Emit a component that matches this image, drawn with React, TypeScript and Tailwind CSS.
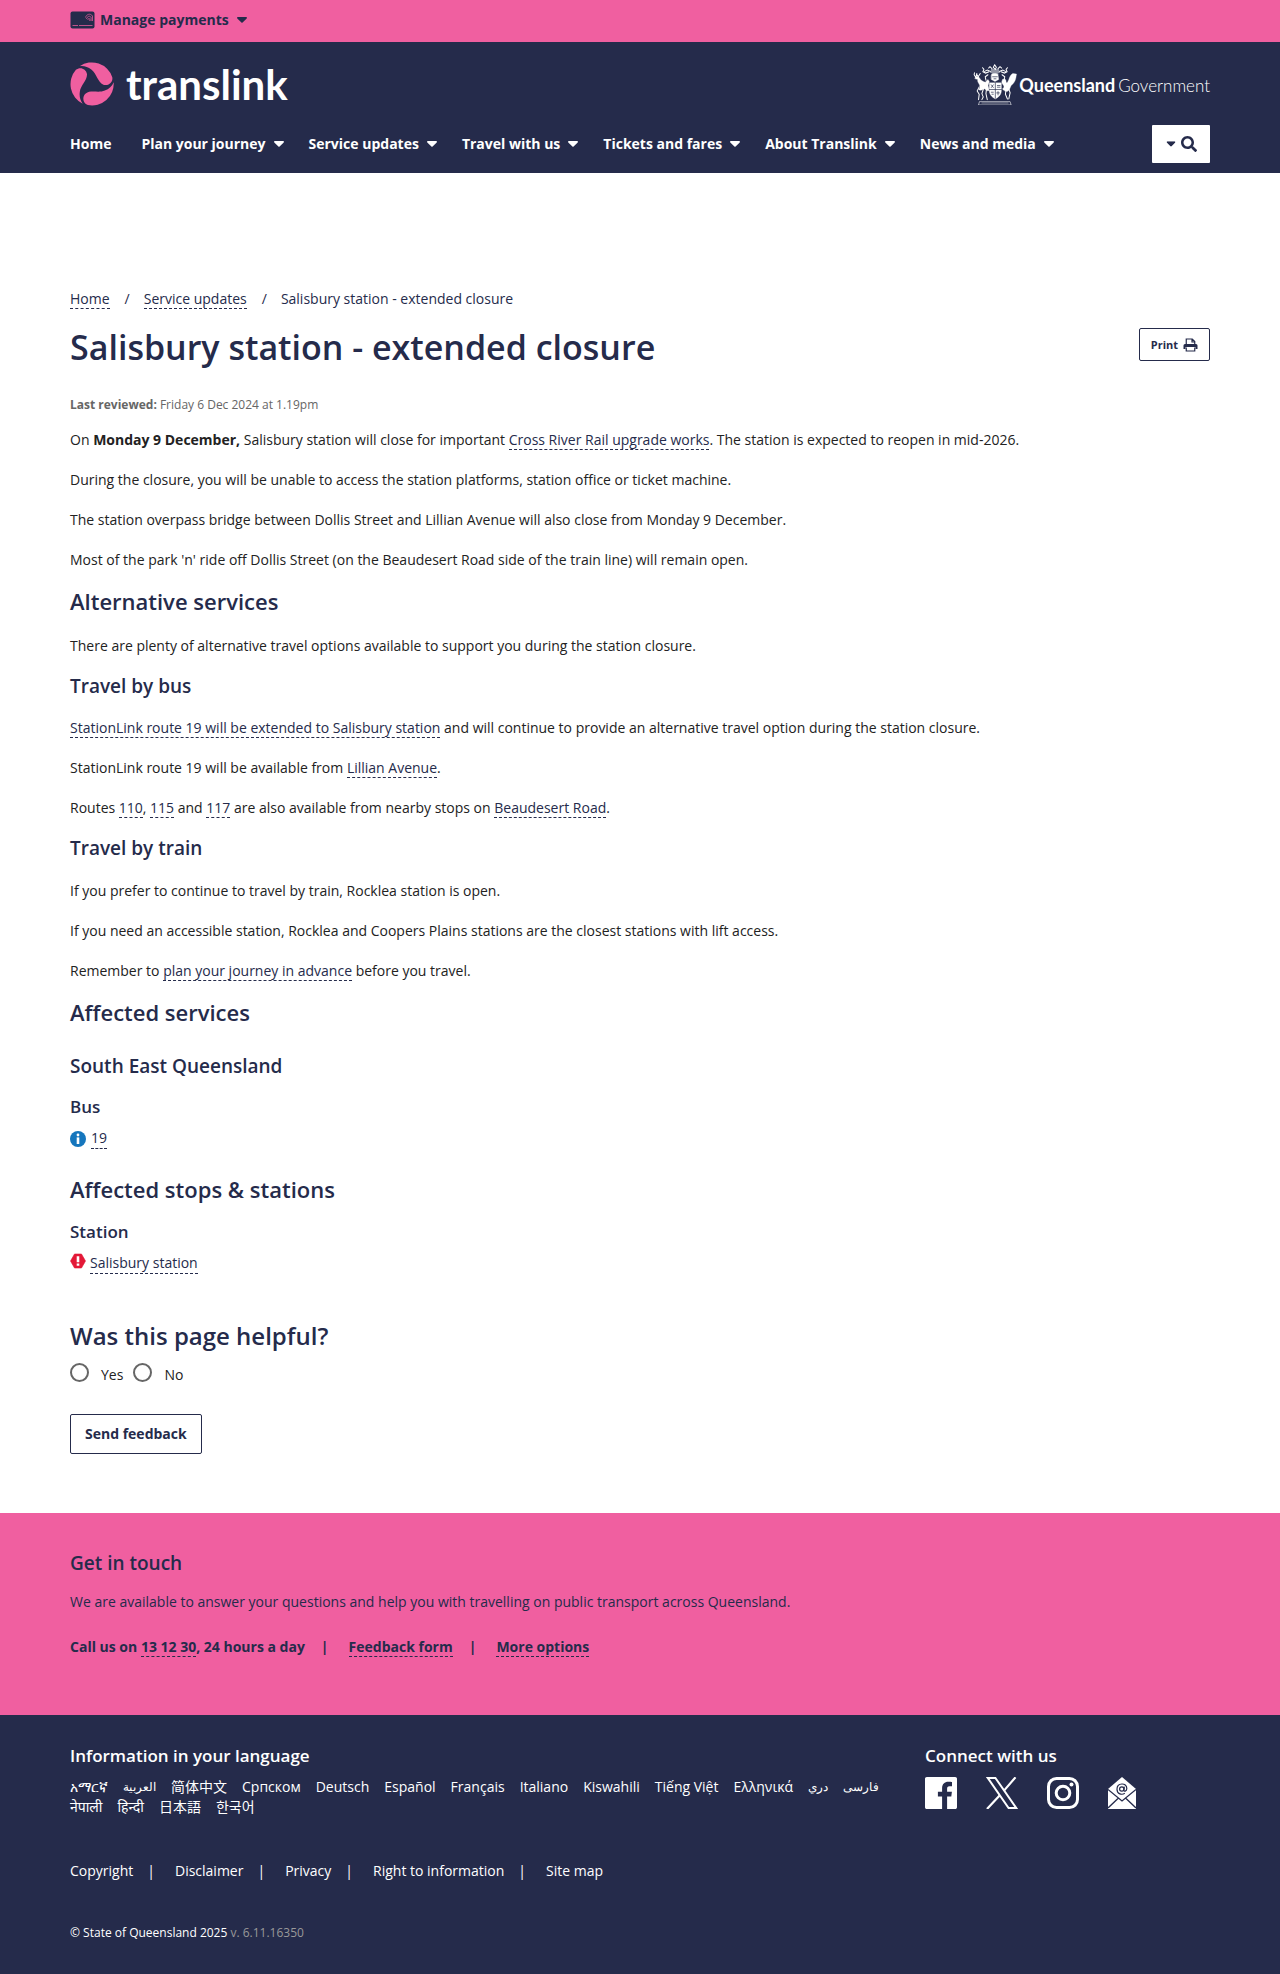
import React from "react";
import { FaSearch } from "react-icons/fa";

const navItems = [
  "Plan your journey",
  "Service updates",
  "Travel with us",
  "Tickets and fares",
  "About Translink",
  "News and media",
];

const languages: { label: string; lang: string; small?: boolean }[] = [
  { label: "አማርኛ", lang: "am" },
  { label: "العربية", lang: "ar", small: true },
  { label: "简体中文", lang: "zh-Hans" },
  { label: "Српском", lang: "sr" },
  { label: "Deutsch", lang: "de" },
  { label: "Español", lang: "es" },
  { label: "Français", lang: "fr" },
  { label: "Italiano", lang: "it" },
  { label: "Kiswahili", lang: "sw" },
  { label: "Tiếng Việt", lang: "vi" },
  { label: "Ελληνικά", lang: "el" },
  { label: "دري", lang: "prs", small: true },
  { label: "فارسی", lang: "fa", small: true },
  { label: "नेपाली", lang: "ne" },
  { label: "हिन्दी", lang: "hi" },
  { label: "日本語", lang: "ja" },
  { label: "한국어", lang: "ko" },
];

const legalLinks = ["Copyright", "Disclaimer", "Privacy", "Right to information", "Site map"];

function Caret({ className = "" }: { className?: string }) {
  return (
    <svg viewBox="0 0 10 6" className={`h-[6px] w-[10px] shrink-0 ${className}`} fill="currentColor" aria-hidden="true">
      <path d="M.9 0h8.2c.8 0 1.2.9.6 1.4L5.6 5.6a.9.9 0 0 1-1.2 0L.3 1.4C-.3.9.1 0 .9 0z" />
    </svg>
  );
}

function CardIcon() {
  return (
    <svg viewBox="0 0 25 18" className="h-[18px] w-[25px]" aria-hidden="true">
      <rect x=".5" y=".5" width="24" height="17" rx="2" fill="#252b4b" />
      <path d="M2.500 14.500H8M9 14.500h13.500" stroke="#f05fa0" strokeWidth="1" opacity=".75" />
      <g fill="none" stroke="#f05fa0" strokeWidth=".8" opacity=".9">
        <path d="M15.500 6.500c1-3.500 5-4.500 7-1.500v5" />
        <path d="M16.500 8c.8-3 3.400-3.700 4.600-1.500v3.500" />
        <path d="M17.800 9c.5-2 1.600-2 2-.8V10" />
      </g>
    </svg>
  );
}

function TranslinkMark() {
  const blade = "M28 12A63 63 0 0 1 123 44C126 60 110 71 97 66C80 59 78 34 62 22C52 14 40 10 28 12Z";
  return (
    <svg viewBox="0 0 128 128" className="size-[44px]" fill="#f05fa0" aria-hidden="true">
      <path d={blade} />
      <path d={blade} transform="rotate(120 64 64)" />
      <path d={blade} transform="rotate(240 64 64)" />
    </svg>
  );
}

function CrestIcon() {
  return (
    <svg viewBox="18 18 130 122" className="h-[41px] w-[44px]" fill="#fff" stroke="#fff" strokeLinecap="round" aria-hidden="true">
      <g fill="none" strokeWidth="3">
        <path d="M26 58l-5-8 1-6M26 58l3-12M33 56l-5-8M33 56l6-10" />
        <path d="M82 20l-4 8 6 6M82 20l5 8-3 6M74 32l-6-6-4 4M92 32l6-6 5 4M50 34l-4-5M50 34l-3 7 8 4 10-4M116 34l4-5M116 34l3 7-8 4-10-4M62 50l-8 6 2 10M104 50l8 6-2 10M70 40l-10-4-8 4M96 40l10-4 8 4" />
        <path d="M72 36h22M70 42h26M74 48h18" />
        <path d="M36 86l-6 12 6 10-2 16M48 94l-4 12 4 10-4 8M58 90l-2 16 4 18M116 94l-2 14 6 14M124 92l4 12-4 18" />
        <path d="M38 130h90l3 10H35z" strokeWidth="1.800" />
        <path d="M44 134h78" strokeWidth="1.400" />
      </g>
      <g strokeWidth="1">
        <path d="M24 58c4-4 9-4 12 0 4 8 10 12 18 14l8-8 4 6-4 12 4 14c-6 4-10 0-14-4-6 4-14 6-18 2 4-4 6-8 2-16-4-6-6-10-4-14l-8-2z" />
        <path d="M106 64c6-4 10 0 10 6 0 4 3 5 5 1 5-8 5-20 15-25l11 2-2 12c-2 10-8 18-14 22-4 8-4 14-12 18-6 0-12-4-14-8 6-2 6-8 2-12-4-6-6-10-1-16z" />
        <path d="M72 50c4-5 16-5 20 0l2 14-11 6-11-6z" />
        <path d="M66 74h36v22c0 14-8 20-18 26-10-6-18-12-18-26z" />
      </g>
      <g fill="none" stroke="#252b4b" strokeWidth="2">
        <path d="M84 74v46M66 94h36M72 80l6 8M78 80l-6 8M90 82h8M90 87h8M72 102h6M74 108h4M92 100v10M88 104h8M76 56h14M80 62h6" />
      </g>
    </svg>
  );
}

function PrinterIcon() {
  return (
    <svg viewBox="0 0 30 28" className="h-[14px] w-[15px]" aria-hidden="true">
      <path d="M6.500 12V2h12l5 5v5M18 2v6h5" fill="none" stroke="#252b4b" strokeWidth="2.400" />
      <path d="M4 12h22a3 3 0 0 1 3 3v7h-4v-4H5v4H1v-7a3 3 0 0 1 3-3z" fill="#252b4b" />
      <path d="M6.500 19v7h17v-7" fill="#fff" stroke="#252b4b" strokeWidth="2.400" />
    </svg>
  );
}

function InfoIcon() {
  return (
    <svg viewBox="0 0 16 16" className="size-4" aria-hidden="true">
      <circle cx="8" cy="8" r="8" fill="#1576bd" />
      <circle cx="8" cy="4" r="1.400" fill="#fff" />
      <rect x="6.700" y="6.400" width="2.600" height="6.600" fill="#fff" />
    </svg>
  );
}

function AlertIcon() {
  return (
    <svg viewBox="0 0 16 14" className="size-4" aria-hidden="true">
      <path d="M4.500 0h7L15.500 7l-4 7h-7L.5 7z" fill="#e31837" stroke="#e31837" strokeLinejoin="round" strokeWidth=".6" />
      <path d="M6.700 2.200h2.600v6H6.700zM6.700 9.600h2.600v2.200H6.700z" fill="#fff" />
    </svg>
  );
}

function FacebookIcon() {
  return (
    <svg viewBox="0 0 32 32" className="size-8" fill="#fff" aria-hidden="true">
      <path d="M1.800 0h28.400C31.200 0 32 .8 32 1.800v28.400c0 1-.8 1.800-1.800 1.800h-8.100V19.600h4.200l.6-4.800h-4.800v-3.100c0-1.400.4-2.400 2.400-2.400H27V5c-.4-.1-2-.2-3.700-.2-3.700 0-6.200 2.300-6.200 6.400v3.600h-4.200v4.800h4.200V32H1.800C.8 32 0 31.200 0 30.200V1.800C0 .8.8 0 1.800 0z" />
    </svg>
  );
}

function XIcon() {
  return (
    <svg viewBox="0 0 32 32" className="size-8" fill="none" stroke="#fff" aria-hidden="true">
      <path d="M1.800 1h7.600l20.800 30h-7.600z" strokeWidth="2" />
      <path d="M29.500.3L18 13.600M13.600 18.400L1 32" strokeWidth="2.200" />
    </svg>
  );
}

function InstagramIcon() {
  return (
    <svg viewBox="0 0 32 32" className="size-8" fill="none" stroke="#fff" strokeWidth="3" aria-hidden="true">
      <rect x="1.500" y="1.500" width="29" height="29" rx="8" />
      <circle cx="16" cy="16" r="6.800" />
      <circle cx="24.500" cy="7.600" r="2" fill="#fff" stroke="none" />
    </svg>
  );
}

function MailIcon() {
  return (
    <svg viewBox="0 0 28 32" className="h-8 w-7" aria-hidden="true">
      <path d="M14 0l14 12v20H0V12z" fill="#fff" />
      <path d="M0 12.500l14 11.500 14-11.500M0 31l10.500-10M28 31l-10.500-10" fill="none" stroke="#252b4b" strokeWidth="1.300" />
      <g fill="none" stroke="#252b4b" strokeWidth="1.200">
        <circle cx="13.800" cy="12" r="2.200" />
        <path d="M16.300 9.600l-.5 3.600c0 1.600 3 1.300 3-1.600 0-6.400-9.800-6-9.800.6 0 5 5 6 7.800 4.100" />
      </g>
    </svg>
  );
}

function Link({ children }: { children: React.ReactNode }) {
  return (
    <a href="#" className="border-b border-dashed border-[#252b4b] text-[#252b4b]">
      {children}
    </a>
  );
}

const h2 = "text-[22px] leading-7 font-semibold text-[#252b4b]";
const h3 = "text-[19px] leading-6 font-semibold text-[#252b4b]";
const h4 = "text-[17px] leading-[22px] font-semibold text-[#252b4b]";
const radio = "size-[19px] shrink-0 appearance-none rounded-full border-2 border-[#666] bg-white checked:border-[6px]";

export default function App() {
  return (
    <div className="bg-white font-['Open_Sans','Noto_Sans','Noto_Sans_CJK_SC',sans-serif] text-sm leading-5 text-[#222]">
      <div className="h-[42px] bg-[#f05fa0] px-[70px] text-[#252b4b]">
        <button type="button" className="flex h-[39px] items-center font-bold">
          <CardIcon />
          <span className="ml-[5px]">Manage payments</span>
          <Caret className="ml-2" />
        </button>
      </div>

      <header className="bg-[#252b4b] px-[70px] pt-5 pb-[10px] text-white">
        <div className="flex h-[44px] items-center justify-between">
          <a href="#" className="flex items-center gap-3" aria-label="Translink">
            <TranslinkMark />
            <span className="font-['Lato',sans-serif] text-[42px] leading-[44px] font-bold">translink</span>
          </a>
          <a href="#" className="flex items-center gap-[2px] font-['Lato',sans-serif] leading-6">
            <CrestIcon />
            <span className="flex items-baseline gap-[3px] pt-[2px]">
              <span className="text-[18px] font-bold">Queensland</span>
              <span className="text-[17px] font-light">Government</span>
            </span>
          </a>
        </div>
        <div className="mt-[19px] flex items-center justify-between">
          <nav className="flex items-center gap-[25px] font-bold">
            <a href="#" className="mr-[5px]">Home</a>
            {navItems.map((item) => (
              <button key={item} type="button" className="flex items-center gap-2 font-bold">
                {item}
                <Caret />
              </button>
            ))}
          </nav>
          <button type="button" aria-label="Search" className="flex h-[38px] w-[58px] items-center justify-center gap-[5px] rounded-[1px] bg-white text-[#252b4b]">
            <Caret className="scale-90" />
            <FaSearch className="size-4" />
          </button>
        </div>
      </header>

      <main className="px-[70px] pt-[116px] pb-[59px]">
        <nav aria-label="Breadcrumb">
          <ol className="flex text-[#252b4b]">
            <li><Link>Home</Link></li>
            <li className="before:pr-[14px] before:pl-[15px] before:content-['/']"><Link>Service updates</Link></li>
            <li className="before:pr-[14px] before:pl-[15px] before:content-['/']">Salisbury station - extended closure</li>
          </ol>
        </nav>

        <div className="mt-4 flex items-start justify-between">
          <h1 className="text-[34px] leading-[44px] font-semibold text-[#252b4b]">Salisbury station - extended closure</h1>
          <button type="button" className="mt-[3px] flex h-[33px] items-center gap-[5px] rounded-[2px] border border-[#252b4b] px-[11px] text-[11px] font-bold text-[#252b4b]">
            Print
            <PrinterIcon />
          </button>
        </div>

        <p className="mt-[26px] text-xs leading-5 text-[#666]">
          <strong>Last reviewed:</strong> Friday 6 Dec 2024 at 1.19pm
        </p>

        <div className="mt-[15px] flex flex-col gap-5">
          <p>
            On <strong>Monday 9 December,</strong> Salisbury station will close for important{" "}
            <Link>Cross River Rail upgrade works</Link>. The station is expected to reopen in mid-2026.
          </p>
          <p>During the closure, you will be unable to access the station platforms, station office or ticket machine.</p>
          <p>The station overpass bridge between Dollis Street and Lillian Avenue will also close from Monday 9 December.</p>
          <p>Most of the park 'n' ride off Dollis Street (on the Beaudesert Road side of the train line) will remain open.</p>
        </div>

        <h2 className={`mt-[17px] ${h2}`}>Alternative services</h2>
        <p className="mt-[21px]">There are plenty of alternative travel options available to support you during the station closure.</p>

        <h3 className={`mt-[18px] ${h3}`}>Travel by bus</h3>
        <div className="mt-5 flex flex-col gap-5">
          <p>
            <Link>StationLink route 19 will be extended to Salisbury station</Link> and will continue to provide an
            alternative travel option during the station closure.
          </p>
          <p>StationLink route 19 will be available from <Link>Lillian Avenue</Link>.</p>
          <p>
            Routes <Link>110</Link>, <Link>115</Link> and <Link>117</Link> are also available from nearby stops on{" "}
            <Link>Beaudesert Road</Link>.
          </p>
        </div>

        <h3 className={`mt-[18px] ${h3}`}>Travel by train</h3>
        <div className="mt-[21px] flex flex-col gap-5">
          <p>If you prefer to continue to travel by train, Rocklea station is open.</p>
          <p>If you need an accessible station, Rocklea and Coopers Plains stations are the closest stations with lift access.</p>
          <p>Remember to <Link>plan your journey in advance</Link> before you travel.</p>
        </div>

        <h2 className={`mt-[17px] ${h2}`}>Affected services</h2>
        <h3 className={`mt-7 ${h3}`}>South East Queensland</h3>
        <h4 className={`mt-[18px] ${h4}`}>Bus</h4>
        <div className="mt-[10px] flex items-center gap-[5px]">
          <InfoIcon />
          <Link>19</Link>
        </div>

        <h2 className={`mt-[26px] ${h2}`}>Affected stops &amp; stations</h2>
        <h4 className={`mt-[18px] ${h4}`}>Station</h4>
        <div className="mt-[10px] flex items-start gap-1">
          <AlertIcon />
          <Link>Salisbury station</Link>
        </div>

        <form onSubmit={(e) => e.preventDefault()}>
          <fieldset>
            <legend className="pt-[46px] text-2xl leading-8 font-semibold text-[#252b4b]">Was this page helpful?</legend>
            <div className="mt-[11px] flex h-5 items-start gap-[10px]">
              <label className="flex items-start gap-3"><input type="radio" name="helpful" className={radio} /><span className="pt-[2px]">Yes</span></label>
              <label className="flex items-start gap-3"><input type="radio" name="helpful" className={radio} /><span className="pt-[2px]">No</span></label>
            </div>
          </fieldset>
          <button type="submit" className="mt-[31px] h-10 rounded-[2px] border border-[#252b4b] px-[14px] font-bold text-[#252b4b]">
            Send feedback
          </button>
        </form>
      </main>

      <section className="bg-[#f05fa0] px-[70px] pt-[38px] pb-[58px] text-[#252b4b]">
        <h3 className={h3}>Get in touch</h3>
        <p className="mt-[17px]">We are available to answer your questions and help you with travelling on public transport across Queensland.</p>
        <ul className="mt-[25px] flex items-center font-bold">
          <li>Call us on <Link>13 12 30</Link>, 24 hours a day</li>
          <li className="before:pr-5 before:pl-4 before:content-['|']"><Link>Feedback form</Link></li>
          <li className="before:pr-5 before:pl-4 before:content-['|']"><Link>More options</Link></li>
        </ul>
      </section>

      <footer className="bg-[#252b4b] px-[70px] pt-[30px] pb-[31px] text-white">
        <div className="flex">
          <div className="w-3/4 pr-[30px]">
            <h4 className="text-[17px] leading-[22px] font-semibold">Information in your language</h4>
            <ul className="mt-[10px] flex flex-wrap gap-x-[15px]">
              {languages.map(({ label, lang, small }) => (
                <li key={lang} className={small ? "h-5 text-xs leading-5" : "h-5"}><a href="#" lang={lang}>{label}</a></li>
              ))}
            </ul>
          </div>
          <div className="w-1/4">
            <h4 className="text-[17px] leading-[22px] font-semibold">Connect with us</h4>
            <div className="mt-[10px] flex gap-[29px]">
              <a href="#" aria-label="Facebook"><FacebookIcon /></a>
              <a href="#" aria-label="X"><XIcon /></a>
              <a href="#" aria-label="Instagram"><InstagramIcon /></a>
              <a href="#" aria-label="Email"><MailIcon /></a>
            </div>
          </div>
        </div>
        <ul className="mt-[44px] flex">
          {legalLinks.map((l, i) => (
            <li key={l} className={i > 0 ? "before:pr-5 before:pl-[14px] before:content-['|']" : ""}>
              <a href="#">{l}</a>
            </li>
          ))}
        </ul>
        <p className="mt-[42px] text-xs leading-5">
          © State of Queensland 2025 <span className="text-[#999]">v. 6.11.16350</span>
        </p>
      </footer>
    </div>
  );
}
